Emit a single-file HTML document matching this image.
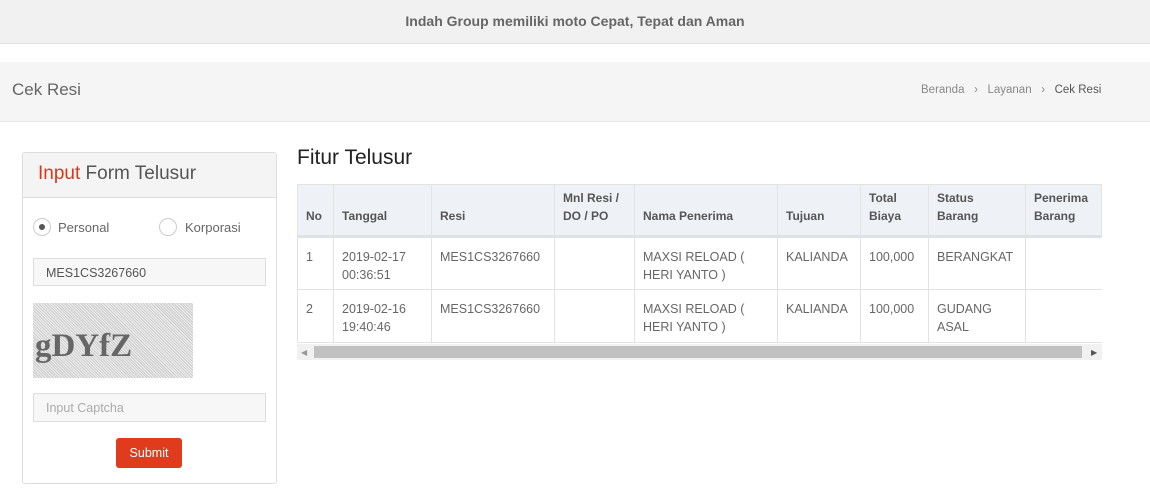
<!DOCTYPE html><html><head><style>
body{margin:0;width:1150px;height:488px;overflow:hidden;background:#fff;font-family:"Liberation Sans",sans-serif;color:#555;position:relative}
.a{position:absolute}
td,th{border-right:1px solid #e3e3e3;border-bottom:1px solid #e3e3e3;padding:0 8px;font-size:12.5px;text-align:left;vertical-align:top;line-height:18px}
th{background:#eef2f6;color:#555;font-weight:bold;vertical-align:bottom;padding-bottom:10px;font-size:12px}
td{color:#666;padding-top:10px}
table{border-collapse:collapse;table-layout:fixed}
</style></head><body>
<div class="a" style="left:0;top:0;width:1150px;height:43px;background:#f1f1f1;border-bottom:1px solid #e2e2e2;text-align:center;line-height:43px;font-weight:bold;font-size:14px;color:#666">Indah Group memiliki moto Cepat, Tepat dan Aman</div>
<div class="a" style="left:0;top:62px;width:1150px;height:59px;background:#f5f5f5;border-bottom:1px solid #e8e8e8"></div>
<div class="a" style="left:12px;top:80px;font-size:17px;color:#666">Cek Resi</div>
<div class="a" style="left:921px;top:84px;font-size:11.5px;color:#888">Beranda &nbsp;&nbsp;›&nbsp;&nbsp; Layanan &nbsp;&nbsp;›&nbsp;&nbsp; <span style="color:#555">Cek Resi</span></div>
<div class="a" style="left:22px;top:152px;width:253px;height:330px;border:1px solid #ddd;border-radius:3px"></div>
<div class="a" style="left:23px;top:153px;width:253px;height:44px;background:#f4f4f4;border-bottom:1px solid #ddd;border-radius:3px 3px 0 0"></div>
<div class="a" style="left:38px;top:163px;font-size:19px;color:#555"><span style="color:#d2391d">Input</span> Form Telusur</div>
<div class="a" style="left:33px;top:218px;width:16px;height:16px;border:1px solid #ccc;border-radius:50%"><div style="width:6px;height:6px;background:#555;border-radius:50%;margin:5px"></div></div>
<div class="a" style="left:58px;top:220px;font-size:13px;color:#666">Personal</div>
<div class="a" style="left:159px;top:218px;width:16px;height:16px;border:1px solid #ccc;border-radius:50%"></div>
<div class="a" style="left:185px;top:220px;font-size:13px;color:#666">Korporasi</div>
<div class="a" style="left:33px;top:258px;width:231px;height:28px;border:1px solid #ddd;background:#f7f7f7;font-size:12.5px;line-height:28px;padding-left:12px;box-sizing:border-box;width:233px;color:#555">MES1CS3267660</div>
<div class="a" style="left:33px;top:303px;width:160px;height:75px;background:repeating-linear-gradient(45deg,#ccc 0 1px,#eee 1px 2px)"></div>
<div class="a" style="left:35px;top:328px;font-family:'Liberation Serif',serif;font-weight:bold;font-size:33px;color:#666">gDYfZ</div>
<div class="a" style="left:33px;top:393px;width:233px;height:29px;border:1px solid #ddd;background:#f7f7f7;box-sizing:border-box;font-size:12.5px;line-height:28px;padding-left:12px;color:#aaa">Input Captcha</div>
<div class="a" style="left:116px;top:438px;width:66px;height:30px;background:#df3b1c;border-radius:3px;color:#fff;font-size:12.5px;text-align:center;line-height:30px">Submit</div>
<div class="a" style="left:297px;top:146px;font-size:21px;color:#222">Fitur Telusur</div>
<table class="a" style="left:297px;top:184px;border-top:1px solid #e3e3e3;border-left:1px solid #e3e3e3">
<colgroup><col style="width:36px"><col style="width:98px"><col style="width:123px"><col style="width:80px"><col style="width:143px"><col style="width:83px"><col style="width:68px"><col style="width:97px"><col style="width:76px"></colgroup>
<tr style="height:52px;border-bottom:3px solid #dde2e6"><th>No</th><th>Tanggal</th><th>Resi</th><th>Mnl Resi / DO / PO</th><th>Nama Penerima</th><th>Tujuan</th><th>Total Biaya</th><th>Status Barang</th><th>Penerima Barang</th></tr>
<tr style="height:53px"><td>1</td><td>2019-02-17 00:36:51</td><td>MES1CS3267660</td><td></td><td>MAXSI RELOAD ( HERI YANTO )</td><td>KALIANDA</td><td>100,000</td><td>BERANGKAT</td><td style="border-right:none"></td></tr>
<tr style="height:53px"><td>2</td><td>2019-02-16 19:40:46</td><td>MES1CS3267660</td><td></td><td>MAXSI RELOAD ( HERI YANTO )</td><td>KALIANDA</td><td>100,000</td><td>GUDANG ASAL</td><td style="border-right:none"></td></tr>
</table>
<div class="a" style="left:297px;top:344px;width:805px;height:16px;background:#f1f1f1"></div>
<div class="a" style="left:314px;top:346px;width:768px;height:12px;background:#c1c1c1"></div>
<div class="a" style="left:301px;top:348px;font-size:8px;color:#999">◀</div>
<div class="a" style="left:1091px;top:348px;font-size:8px;color:#555">▶</div>
</body></html>
